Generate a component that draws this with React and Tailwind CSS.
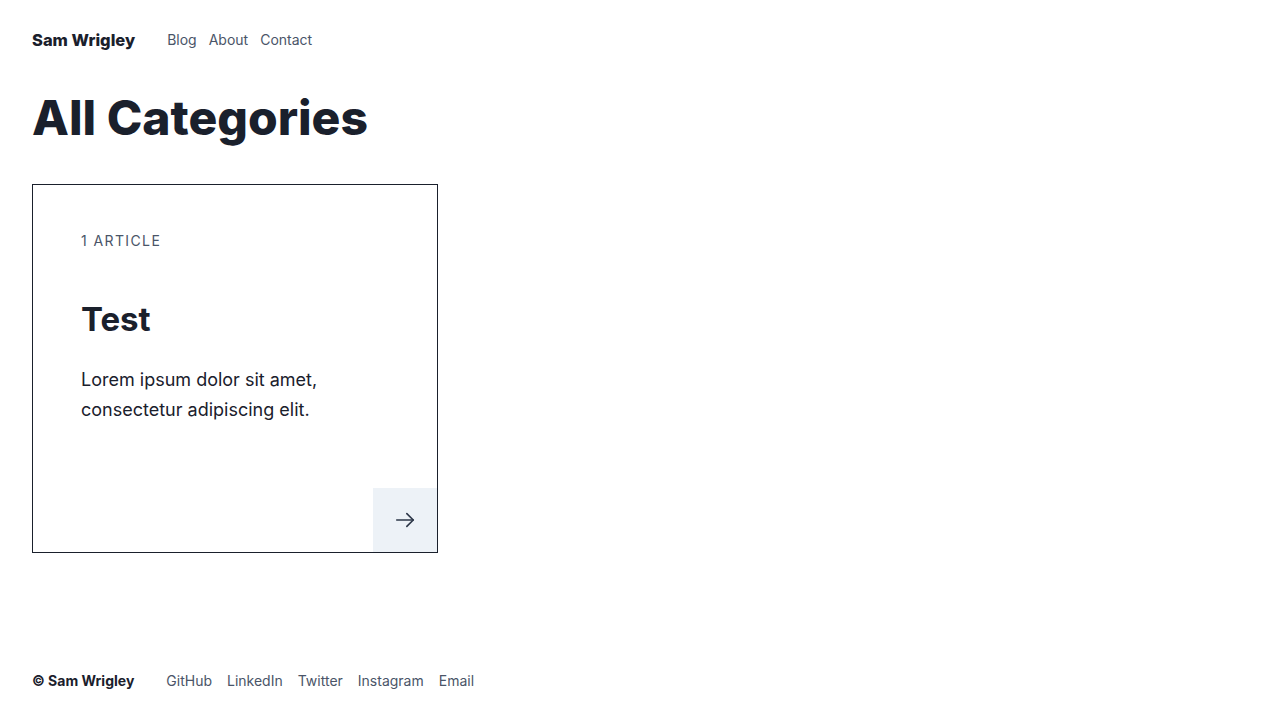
export default function App() {
  return (
    <div
      className="min-h-screen flex flex-col bg-white px-8 text-[#1a202c]"
      style={{ fontFamily: "Inter, 'Noto Sans', sans-serif" }}
    >
      <header className="flex items-center pt-7">
        <a className="text-[16.5px] leading-6 font-extrabold text-[#1a202c]">Sam Wrigley</a>
        <nav className="ml-8 flex gap-3 text-sm leading-5 text-[#4a5568]">
          <a>Blog</a>
          <a>About</a>
          <a>Contact</a>
        </nav>
      </header>

      <main>
        <h1 className="mt-[42px] text-5xl leading-none font-extrabold text-[#1a202c]">
          All Categories
        </h1>

        <div className="mt-[42px] flex">
          <div className="flex w-[406px] flex-col border border-[#1a202c]">
            <div className="px-12 pt-[46px]">
              <p className="text-sm leading-5 uppercase tracking-widest text-[#4a5568]">1 Article</p>
              <h2 className="mt-12 text-[33px] leading-10 font-bold text-[#1a202c]">Test</h2>
              <p className="mt-[26px] text-lg leading-[30px] text-[#1a202c]">
                Lorem ipsum dolor sit amet, consectetur adipiscing elit.
              </p>
            </div>
            <div className="mt-[63px] flex justify-end">
              <a className="flex h-16 w-16 items-center justify-center bg-[#edf2f7] text-[#2d3748]">
                <svg width="22" height="22" viewBox="0 0 24 24" fill="none" stroke="currentColor" strokeWidth="1.75" strokeLinecap="round" strokeLinejoin="round">
                  <path d="M3 12h18" />
                  <path d="M14 5l7 7-7 7" />
                </svg>
              </a>
            </div>
          </div>
        </div>
      </main>

      <footer className="mt-auto flex items-center pb-[29px] text-sm leading-5">
        <span className="font-bold text-[#1a202c]">© Sam Wrigley</span>
        <nav className="ml-8 flex gap-[15px] text-[#4a5568]">
          <a>GitHub</a>
          <a>LinkedIn</a>
          <a>Twitter</a>
          <a>Instagram</a>
          <a>Email</a>
        </nav>
      </footer>
    </div>
  );
}
